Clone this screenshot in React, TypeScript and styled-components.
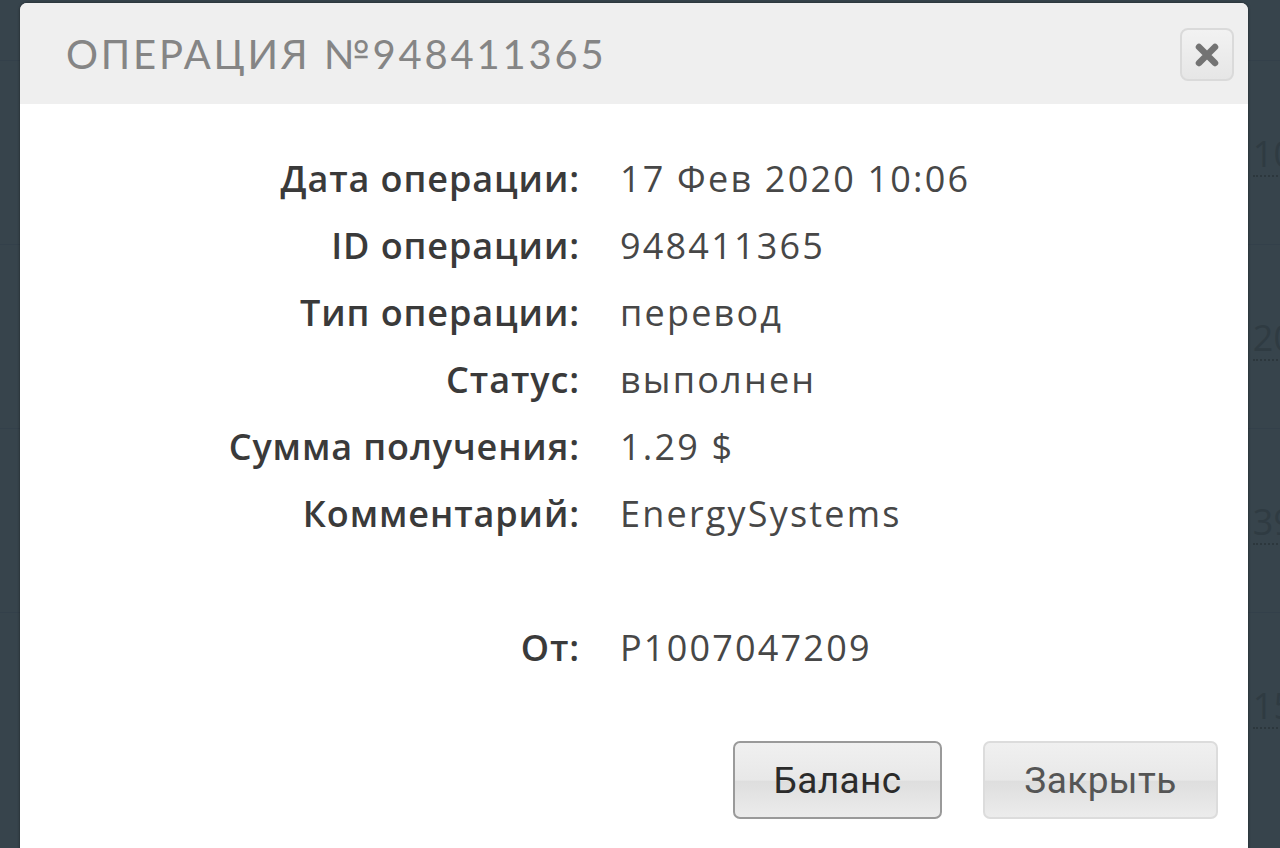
import styled, { createGlobalStyle } from 'styled-components'

const Global = createGlobalStyle`
	html, body {
		margin: 0;
		padding: 0;
		background: #37444c;
		overflow: hidden;
	}
`

const Page = styled.div`
	position: relative;
	width: 1280px;
	height: 848px;
	background: #37444c;
	overflow: hidden;
`

const BackList = styled.div`
	display: flex;
	flex-direction: column;
	padding-top: 60px;
`

const BackRow = styled.div`
	height: 184px;
	border-top: 1px solid #33404a;
	display: flex;
	justify-content: flex-end;
	padding-top: 68px;
	box-sizing: border-box;
`

const BackNum = styled.span`
	font-family: "Open Sans", sans-serif;
	font-size: 36px;
	color: #2f3b42;
	border-bottom: 2px dotted #2c373d;
	height: 46px;
	margin-right: -14px;
`

const Modal = styled.div`
	position: absolute;
	left: 20px;
	top: 3px;
	width: 1228px;
	height: 880px;
	background: #fff;
	border-radius: 7px;
	box-shadow: 0 0 3px rgba(0, 0, 0, 0.5);
	overflow: hidden;
	display: flex;
	flex-direction: column;
`

const Header = styled.div`
	height: 101px;
	background: #efefef;
	display: flex;
	align-items: center;
	justify-content: space-between;
	padding: 0 14px 0 46px;
	box-sizing: border-box;
`

const Title = styled.h1`
	margin: 0;
	font-family: "Lato", "DejaVu Sans", sans-serif;
	font-weight: 400;
	font-size: 40px;
	letter-spacing: 2.8px;
	color: #858585;
	text-transform: uppercase;
`

const CloseBtn = styled.button`
	width: 54px;
	height: 53px;
	border: 2px solid #dadada;
	border-radius: 8px;
	background: linear-gradient(#f2f2f2, #e6e6e6);
	display: flex;
	align-items: center;
	justify-content: center;
	padding: 0;
	margin-top: 2px;
`

const Body = styled.div`
	padding: 52px 0 0 0;
	display: flex;
	flex-direction: column;
`

const Grid = styled.div`
	display: grid;
	grid-template-columns: 560px 1fr;
	column-gap: 40px;
	row-gap: 21px;
	font-family: "Open Sans", sans-serif;
	font-size: 36px;
	line-height: 46px;
`

const Label = styled.div<{ $gap?: boolean }>`
	text-align: right;
	font-weight: 600;
	letter-spacing: 0.9px;
	color: #3a3a3a;
	margin-top: ${p => p.$gap ? '67px' : '0'};
`

const Value = styled.div<{ $gap?: boolean }>`
	color: #474747;
	letter-spacing: 2.2px;
	margin-top: ${p => p.$gap ? '67px' : '0'};
`

const Footer = styled.div`
	display: flex;
	justify-content: flex-end;
	gap: 41px;
	padding: 70px 30px 0 0;
`

const Button = styled.button<{ $primary?: boolean }>`
	height: 78px;
	width: ${p => p.$primary ? '209px' : '235px'};
	border-radius: 7px;
	border: 2px solid ${p => p.$primary ? '#9a9a9a' : '#dcdcdc'};
	background: linear-gradient(#f0f0f0 0%, #e8e8e8 50%, #dedede 52%, #ececec 100%);
	font-family: "Roboto", sans-serif;
	font-size: 37px;
	letter-spacing: 0.4px;
	color: ${p => p.$primary ? '#2b2b2b' : '#555'};
	cursor: pointer;
`

const rows = [
	{ label: 'Дата операции:', value: '17 Фев 2020 10:06' },
	{ label: 'ID операции:', value: '948411365' },
	{ label: 'Тип операции:', value: 'перевод' },
	{ label: 'Статус:', value: 'выполнен' },
	{ label: 'Сумма получения:', value: '1.29 $' },
	{ label: 'Комментарий:', value: 'EnergySystems' },
	{ label: 'От:', value: 'P1007047209', gap: true },
]

export default function App() {
	return (
		<Page>
			<Global />
			<BackList>
				{['10', '20', '39', '15'].map(n => (
					<BackRow key={n}><BackNum>{n}</BackNum></BackRow>
				))}
			</BackList>
			<Modal>
				<Header>
					<Title>Операция №948411365</Title>
					<CloseBtn>
						<svg width="26" height="26" viewBox="0 0 26 26">
							<path d="M5 5 L21 21 M21 5 L5 21" stroke="#737373" strokeWidth="6.5" strokeLinecap="round" />
						</svg>
					</CloseBtn>
				</Header>
				<Body>
					<Grid>
						{rows.map(r => (
							<>
								<Label key={r.label} $gap={r.gap}>{r.label}</Label>
								<Value key={r.value} $gap={r.gap}>{r.value}</Value>
							</>
						))}
					</Grid>
					<Footer>
						<Button $primary>Баланс</Button>
						<Button>Закрыть</Button>
					</Footer>
				</Body>
			</Modal>
		</Page>
	)
}
